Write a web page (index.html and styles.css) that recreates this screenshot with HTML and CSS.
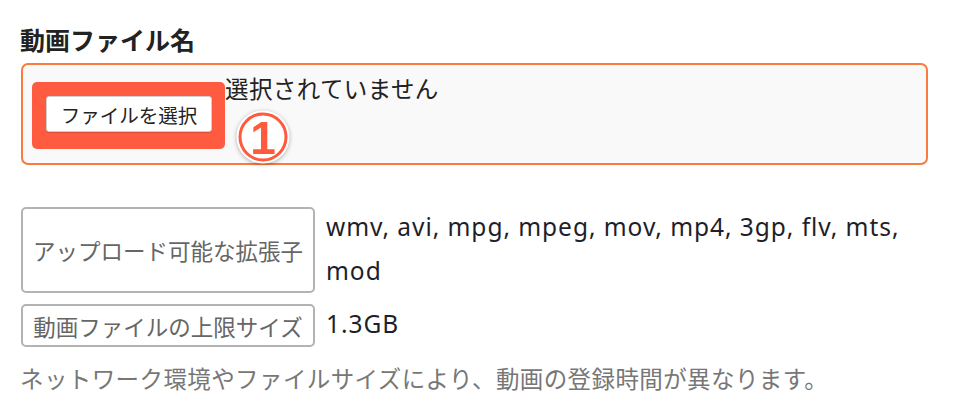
FILE: index.html
```html
<!DOCTYPE html>
<html lang="ja">
<head>
    <meta charset="UTF-8">
    <title>動画ファイル名</title>
    <link rel="stylesheet" href="styles.css">
</head>
<body>

	<div class="upload">
	    <h2 class="upload_title">動画ファイル名</h2>

	    <div class="file_box">
	        <div class="pick_mark">
	            <button class="pick_bt">ファイルを選択</button>
	        </div>
	        <span class="file_name">選択されていません</span>

	        <svg class="step_no" width="58" height="58" viewBox="0 0 58 58">
	            <circle cx="29" cy="29" r="26.5" fill="#fff"/>
	            <circle cx="29" cy="29" r="23" fill="none" stroke="#ff5a3c" stroke-width="3"/>
	            <text x="29" y="46" text-anchor="middle" class="step_num">1</text>
	        </svg>
	    </div>

	    <div class="info_list">
	        <div class="info_row">
	            <div class="info_label tall">アップロード可能な拡張子</div>
	            <div class="info_value">wmv, avi, mpg, mpeg, mov, mp4, 3gp, flv, mts,<br>mod</div>
	        </div>
	        <div class="info_row">
	            <div class="info_label">動画ファイルの上限サイズ</div>
	            <div class="info_value">1.3GB</div>
	        </div>
	    </div>

	    <p class="note">ネットワーク環境やファイルサイズにより、動画の登録時間が異なります。</p>
	</div>

</body>
</html>
```

FILE: styles.css
```css
*{
    margin: 0;
    padding: 0;
    box-sizing: border-box;
}
body{
    background: #fff;
    font-family: "Noto Sans CJK JP", sans-serif;
    color: #1f1f2b;
}
.upload{
    padding: 21px 30px 0 20px;
}
.upload_title{
    font-size: 25px;
    line-height: 36px;
    font-weight: bold;
    color: #222;
    margin-bottom: 6px;
}
.file_box{
    position: relative;
    display: flex;
    align-items: flex-start;
    height: 102px;
    margin-left: 1px;
    padding: 6px 9px;
    border: 2px solid #f97b3d;
    border-radius: 7px;
    background: #f9f9f9;
}
.pick_mark{
    margin-top: 11px;
    padding: 14px 13px 17px 14px;
    background: #ff5b41;
    border-radius: 5px;
}
.pick_bt{
    display: block;
    width: 166px;
    height: 36px;
    font-family: "Noto Sans CJK JP", sans-serif;
    font-size: 19.5px;
    color: #222;
    background: #fff;
    border: 1px solid #cfcfcf;
    border-radius: 3px;
    box-shadow: 0 1px 1px rgba(0,0,0,0.15);
}
.file_name{
    font-size: 23.5px;
    letter-spacing: 0.4px;
    line-height: 34px;
    color: #222;
}
/* number badge laid over the input */
.step_no{
    position: absolute;
    left: 211px;
    top: 43px;
    filter: drop-shadow(0 1px 2px rgba(0,0,0,0.3));
}
.step_num{
    font-family: "Liberation Sans", sans-serif;
    font-weight: bold;
    font-size: 46px;
    fill: #ff5a3c;
}
.info_list{
    display: flex;
    flex-direction: column;
    gap: 11px;
    margin: 42px 0 0 1px;
}
.info_row{
    display: flex;
    align-items: flex-start;
    gap: 11px;
}
.info_label{
    flex: none;
    display: flex;
    align-items: center;
    justify-content: center;
    width: 294px;
    height: 43px;
    font-size: 22.5px;
    color: #666;
    border: 2px solid #b3b3b3;
    border-radius: 5px;
}
.info_label.tall{
    height: 86px;
}
.info_value{
    font-family: "Noto Sans", "Noto Sans CJK JP", sans-serif;
    font-size: 24.5px;
    letter-spacing: 0.95px;
    line-height: 44px;
    margin-top: -2px;
    color: #1f1f2b;
}
.note{
    margin-top: 13px;
    font-size: 23.5px;
    letter-spacing: 0.4px;
    line-height: 36px;
    color: #777;
}
```
